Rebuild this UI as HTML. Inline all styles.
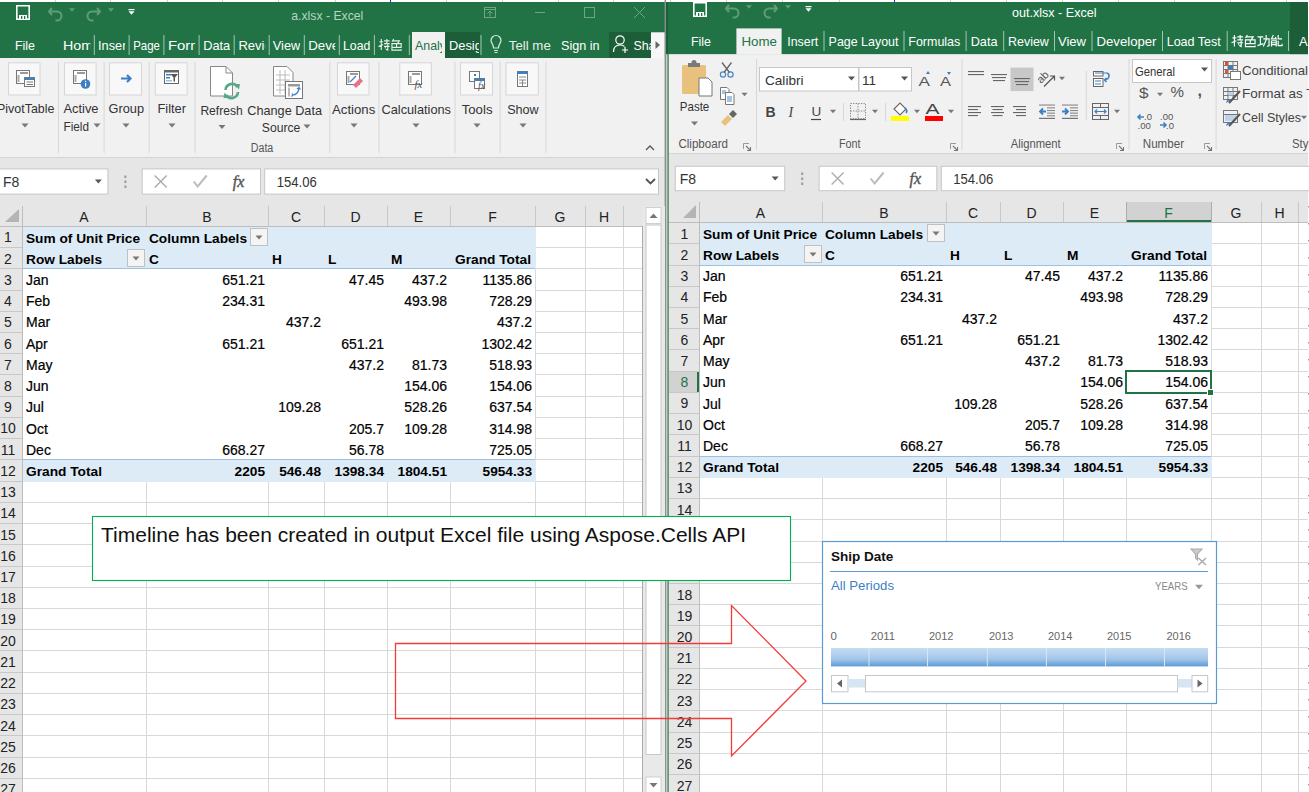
<!DOCTYPE html>
<html><head><meta charset="utf-8"><style>
html,body{margin:0;padding:0;width:1309px;height:792px;overflow:hidden;background:#fff;font-family:"Liberation Sans",sans-serif;}
</style></head><body>
<svg width="1309" height="792" viewBox="0 0 1309 792" style="position:absolute;left:0;top:0" font-family='"Liberation Sans", sans-serif'>
<rect x="0" y="0" width="1309" height="792" fill="#ffffff" />
<line x1="55.5" y1="0" x2="55.5" y2="2" stroke="#d0d0d0" stroke-width="1" />
<line x1="110.5" y1="0" x2="110.5" y2="2" stroke="#d0d0d0" stroke-width="1" />
<line x1="167.5" y1="0" x2="167.5" y2="2" stroke="#d0d0d0" stroke-width="1" />
<line x1="222.5" y1="0" x2="222.5" y2="2" stroke="#d0d0d0" stroke-width="1" />
<line x1="278.5" y1="0" x2="278.5" y2="2" stroke="#d0d0d0" stroke-width="1" />
<line x1="335.5" y1="0" x2="335.5" y2="2" stroke="#d0d0d0" stroke-width="1" />
<line x1="446.5" y1="0" x2="446.5" y2="2" stroke="#d0d0d0" stroke-width="1" />
<line x1="502.5" y1="0" x2="502.5" y2="2" stroke="#d0d0d0" stroke-width="1" />
<line x1="558.5" y1="0" x2="558.5" y2="2" stroke="#d0d0d0" stroke-width="1" />
<line x1="613.5" y1="0" x2="613.5" y2="2" stroke="#d0d0d0" stroke-width="1" />
<line x1="390.5" y1="0" x2="390.5" y2="2" stroke="#2030d0" stroke-width="1" />
<rect x="0" y="2" width="665" height="56" fill="#217346" />
<rect x="0" y="58" width="665" height="99" fill="#f1f1f1" />
<line x1="0" y1="157.5" x2="665" y2="157.5" stroke="#d5d5d5" stroke-width="1" />
<rect x="0" y="158" width="665" height="68" fill="#e6e6e6" />
<line x1="670.5" y1="0" x2="670.5" y2="2" stroke="#d0d0d0" stroke-width="1" />
<line x1="726.5" y1="0" x2="726.5" y2="2" stroke="#d0d0d0" stroke-width="1" />
<line x1="782.5" y1="0" x2="782.5" y2="2" stroke="#d0d0d0" stroke-width="1" />
<line x1="839.5" y1="0" x2="839.5" y2="2" stroke="#d0d0d0" stroke-width="1" />
<line x1="950.5" y1="0" x2="950.5" y2="2" stroke="#d0d0d0" stroke-width="1" />
<line x1="1006.5" y1="0" x2="1006.5" y2="2" stroke="#d0d0d0" stroke-width="1" />
<line x1="1062.5" y1="0" x2="1062.5" y2="2" stroke="#d0d0d0" stroke-width="1" />
<line x1="1118.5" y1="0" x2="1118.5" y2="2" stroke="#d0d0d0" stroke-width="1" />
<line x1="1174.5" y1="0" x2="1174.5" y2="2" stroke="#d0d0d0" stroke-width="1" />
<line x1="1230.5" y1="0" x2="1230.5" y2="2" stroke="#d0d0d0" stroke-width="1" />
<line x1="1286.5" y1="0" x2="1286.5" y2="2" stroke="#d0d0d0" stroke-width="1" />
<line x1="894.5" y1="0" x2="894.5" y2="2" stroke="#2030d0" stroke-width="1" />
<rect x="666" y="2" width="643" height="52.4" fill="#217346" />
<rect x="1290" y="2" width="18" height="52.4" fill="#1b5e38" />
<rect x="669" y="54.4" width="640" height="99" fill="#f1f1f1" />
<line x1="669" y1="153.5" x2="1309" y2="153.5" stroke="#d5d5d5" stroke-width="1" />
<rect x="669" y="154" width="640" height="68.6" fill="#e6e6e6" />
<rect x="664.6" y="0" width="1.4" height="792" fill="#8f8f8f" />
<rect x="666" y="2" width="2" height="52.4" fill="#1b5e38" />
<rect x="666" y="54.4" width="1.5" height="740" fill="#c8c8c8" />
<rect x="667.5" y="54.4" width="1.2" height="740" fill="#217346" />
<rect x="1308" y="0" width="1" height="792" fill="#ffffff" />
<rect x="1308" y="172" width="1" height="1.5" fill="#9a9a9a" />
<rect x="1308" y="189" width="1" height="1.5" fill="#9a9a9a" />
<rect x="1308" y="206" width="1" height="1.5" fill="#9a9a9a" />
<rect x="1308" y="223" width="1" height="1.5" fill="#9a9a9a" />
<rect x="1308" y="240" width="1" height="1.5" fill="#9a9a9a" />
<rect x="1308" y="257" width="1" height="1.5" fill="#9a9a9a" />
<rect x="1308" y="274" width="1" height="1.5" fill="#9a9a9a" />
<rect x="1308" y="291" width="1" height="1.5" fill="#9a9a9a" />
<rect x="1308" y="308" width="1" height="1.5" fill="#9a9a9a" />
<rect x="1308" y="325" width="1" height="1.5" fill="#9a9a9a" />
<rect x="1308" y="342" width="1" height="1.5" fill="#9a9a9a" />
<rect x="1308" y="359" width="1" height="1.5" fill="#9a9a9a" />
<rect x="1308" y="376" width="1" height="1.5" fill="#9a9a9a" />
<rect x="1308" y="393" width="1" height="1.5" fill="#9a9a9a" />
<rect x="1308" y="410" width="1" height="1.5" fill="#9a9a9a" />
<rect x="1308" y="427" width="1" height="1.5" fill="#9a9a9a" />
<rect x="1308" y="444" width="1" height="1.5" fill="#9a9a9a" />
<rect x="1308" y="461" width="1" height="1.5" fill="#9a9a9a" />
<rect x="1308" y="478" width="1" height="1.5" fill="#9a9a9a" />
<rect x="1308" y="495" width="1" height="1.5" fill="#9a9a9a" />
<rect x="1308" y="512" width="1" height="1.5" fill="#9a9a9a" />
<rect x="1308" y="529" width="1" height="1.5" fill="#9a9a9a" />
<rect x="1308" y="546" width="1" height="1.5" fill="#9a9a9a" />
<rect x="1308" y="563" width="1" height="1.5" fill="#9a9a9a" />
<rect x="1308" y="580" width="1" height="1.5" fill="#9a9a9a" />
<rect x="1308" y="597" width="1" height="1.5" fill="#9a9a9a" />
<rect x="1308" y="614" width="1" height="1.5" fill="#9a9a9a" />
<rect x="1308" y="631" width="1" height="1.5" fill="#9a9a9a" />
<rect x="1308" y="648" width="1" height="1.5" fill="#9a9a9a" />
<rect x="1308" y="665" width="1" height="1.5" fill="#9a9a9a" />
<rect x="1308" y="682" width="1" height="1.5" fill="#9a9a9a" />
<rect x="1308" y="699" width="1" height="1.5" fill="#9a9a9a" />
<rect x="1308" y="716" width="1" height="1.5" fill="#9a9a9a" />
<rect x="1308" y="733" width="1" height="1.5" fill="#9a9a9a" />
<rect x="1308" y="750" width="1" height="1.5" fill="#9a9a9a" />
<rect x="1308" y="767" width="1" height="1.5" fill="#9a9a9a" />
<rect x="1308" y="784" width="1" height="1.5" fill="#9a9a9a" />
<rect x="1308" y="801" width="1" height="1.5" fill="#9a9a9a" />
<line x1="146.5" y1="206" x2="146.5" y2="226" stroke="#c8c8c8" stroke-width="1" />
<line x1="268.5" y1="206" x2="268.5" y2="226" stroke="#c8c8c8" stroke-width="1" />
<line x1="324.5" y1="206" x2="324.5" y2="226" stroke="#c8c8c8" stroke-width="1" />
<line x1="387.5" y1="206" x2="387.5" y2="226" stroke="#c8c8c8" stroke-width="1" />
<line x1="450.5" y1="206" x2="450.5" y2="226" stroke="#c8c8c8" stroke-width="1" />
<line x1="535.5" y1="206" x2="535.5" y2="226" stroke="#c8c8c8" stroke-width="1" />
<line x1="585.5" y1="206" x2="585.5" y2="226" stroke="#c8c8c8" stroke-width="1" />
<line x1="623.5" y1="206" x2="623.5" y2="226" stroke="#c8c8c8" stroke-width="1" />
<line x1="22.5" y1="206" x2="22.5" y2="792" stroke="#bdbdbd" stroke-width="1" />
<line x1="0" y1="226.5" x2="642" y2="226.5" stroke="#bdbdbd" stroke-width="1" />
<rect x="23" y="227" width="619" height="566" fill="#ffffff" />
<rect x="0" y="227" width="22" height="566" fill="#e6e6e6" />
<line x1="0" y1="247.5" x2="22" y2="247.5" stroke="#c8c8c8" stroke-width="1" />
<line x1="536" y1="247.5" x2="642" y2="247.5" stroke="#d9d9d9" stroke-width="1" />
<line x1="0" y1="268.5" x2="22" y2="268.5" stroke="#c8c8c8" stroke-width="1" />
<line x1="536" y1="268.5" x2="642" y2="268.5" stroke="#d9d9d9" stroke-width="1" />
<line x1="0" y1="290.5" x2="22" y2="290.5" stroke="#c8c8c8" stroke-width="1" />
<line x1="536" y1="290.5" x2="642" y2="290.5" stroke="#d9d9d9" stroke-width="1" />
<line x1="0" y1="311.5" x2="22" y2="311.5" stroke="#c8c8c8" stroke-width="1" />
<line x1="536" y1="311.5" x2="642" y2="311.5" stroke="#d9d9d9" stroke-width="1" />
<line x1="0" y1="332.5" x2="22" y2="332.5" stroke="#c8c8c8" stroke-width="1" />
<line x1="536" y1="332.5" x2="642" y2="332.5" stroke="#d9d9d9" stroke-width="1" />
<line x1="0" y1="353.5" x2="22" y2="353.5" stroke="#c8c8c8" stroke-width="1" />
<line x1="536" y1="353.5" x2="642" y2="353.5" stroke="#d9d9d9" stroke-width="1" />
<line x1="0" y1="374.5" x2="22" y2="374.5" stroke="#c8c8c8" stroke-width="1" />
<line x1="536" y1="374.5" x2="642" y2="374.5" stroke="#d9d9d9" stroke-width="1" />
<line x1="0" y1="396.5" x2="22" y2="396.5" stroke="#c8c8c8" stroke-width="1" />
<line x1="536" y1="396.5" x2="642" y2="396.5" stroke="#d9d9d9" stroke-width="1" />
<line x1="0" y1="417.5" x2="22" y2="417.5" stroke="#c8c8c8" stroke-width="1" />
<line x1="536" y1="417.5" x2="642" y2="417.5" stroke="#d9d9d9" stroke-width="1" />
<line x1="0" y1="438.5" x2="22" y2="438.5" stroke="#c8c8c8" stroke-width="1" />
<line x1="536" y1="438.5" x2="642" y2="438.5" stroke="#d9d9d9" stroke-width="1" />
<line x1="0" y1="459.5" x2="22" y2="459.5" stroke="#c8c8c8" stroke-width="1" />
<line x1="536" y1="459.5" x2="642" y2="459.5" stroke="#d9d9d9" stroke-width="1" />
<line x1="0" y1="481.5" x2="22" y2="481.5" stroke="#c8c8c8" stroke-width="1" />
<line x1="536" y1="481.5" x2="642" y2="481.5" stroke="#d9d9d9" stroke-width="1" />
<line x1="0" y1="502.5" x2="22" y2="502.5" stroke="#c8c8c8" stroke-width="1" />
<line x1="23" y1="502.5" x2="642" y2="502.5" stroke="#d9d9d9" stroke-width="1" />
<line x1="0" y1="523.5" x2="22" y2="523.5" stroke="#c8c8c8" stroke-width="1" />
<line x1="23" y1="523.5" x2="642" y2="523.5" stroke="#d9d9d9" stroke-width="1" />
<line x1="0" y1="544.5" x2="22" y2="544.5" stroke="#c8c8c8" stroke-width="1" />
<line x1="23" y1="544.5" x2="642" y2="544.5" stroke="#d9d9d9" stroke-width="1" />
<line x1="0" y1="566.5" x2="22" y2="566.5" stroke="#c8c8c8" stroke-width="1" />
<line x1="23" y1="566.5" x2="642" y2="566.5" stroke="#d9d9d9" stroke-width="1" />
<line x1="0" y1="587.5" x2="22" y2="587.5" stroke="#c8c8c8" stroke-width="1" />
<line x1="23" y1="587.5" x2="642" y2="587.5" stroke="#d9d9d9" stroke-width="1" />
<line x1="0" y1="608.5" x2="22" y2="608.5" stroke="#c8c8c8" stroke-width="1" />
<line x1="23" y1="608.5" x2="642" y2="608.5" stroke="#d9d9d9" stroke-width="1" />
<line x1="0" y1="629.5" x2="22" y2="629.5" stroke="#c8c8c8" stroke-width="1" />
<line x1="23" y1="629.5" x2="642" y2="629.5" stroke="#d9d9d9" stroke-width="1" />
<line x1="0" y1="650.5" x2="22" y2="650.5" stroke="#c8c8c8" stroke-width="1" />
<line x1="23" y1="650.5" x2="642" y2="650.5" stroke="#d9d9d9" stroke-width="1" />
<line x1="0" y1="672.5" x2="22" y2="672.5" stroke="#c8c8c8" stroke-width="1" />
<line x1="23" y1="672.5" x2="642" y2="672.5" stroke="#d9d9d9" stroke-width="1" />
<line x1="0" y1="693.5" x2="22" y2="693.5" stroke="#c8c8c8" stroke-width="1" />
<line x1="23" y1="693.5" x2="642" y2="693.5" stroke="#d9d9d9" stroke-width="1" />
<line x1="0" y1="714.5" x2="22" y2="714.5" stroke="#c8c8c8" stroke-width="1" />
<line x1="23" y1="714.5" x2="642" y2="714.5" stroke="#d9d9d9" stroke-width="1" />
<line x1="0" y1="735.5" x2="22" y2="735.5" stroke="#c8c8c8" stroke-width="1" />
<line x1="23" y1="735.5" x2="642" y2="735.5" stroke="#d9d9d9" stroke-width="1" />
<line x1="0" y1="757.5" x2="22" y2="757.5" stroke="#c8c8c8" stroke-width="1" />
<line x1="23" y1="757.5" x2="642" y2="757.5" stroke="#d9d9d9" stroke-width="1" />
<line x1="0" y1="778.5" x2="22" y2="778.5" stroke="#c8c8c8" stroke-width="1" />
<line x1="23" y1="778.5" x2="642" y2="778.5" stroke="#d9d9d9" stroke-width="1" />
<line x1="0" y1="799.5" x2="22" y2="799.5" stroke="#c8c8c8" stroke-width="1" />
<line x1="23" y1="799.5" x2="642" y2="799.5" stroke="#d9d9d9" stroke-width="1" />
<line x1="146.5" y1="482" x2="146.5" y2="792" stroke="#d9d9d9" stroke-width="1" />
<line x1="268.5" y1="482" x2="268.5" y2="792" stroke="#d9d9d9" stroke-width="1" />
<line x1="324.5" y1="482" x2="324.5" y2="792" stroke="#d9d9d9" stroke-width="1" />
<line x1="387.5" y1="482" x2="387.5" y2="792" stroke="#d9d9d9" stroke-width="1" />
<line x1="450.5" y1="482" x2="450.5" y2="792" stroke="#d9d9d9" stroke-width="1" />
<line x1="535.5" y1="227" x2="535.5" y2="792" stroke="#d9d9d9" stroke-width="1" />
<line x1="585.5" y1="227" x2="585.5" y2="792" stroke="#d9d9d9" stroke-width="1" />
<line x1="623.5" y1="227" x2="623.5" y2="792" stroke="#d9d9d9" stroke-width="1" />
<line x1="822.5" y1="202" x2="822.5" y2="222" stroke="#c8c8c8" stroke-width="1" />
<line x1="946.5" y1="202" x2="946.5" y2="222" stroke="#c8c8c8" stroke-width="1" />
<line x1="1000.5" y1="202" x2="1000.5" y2="222" stroke="#c8c8c8" stroke-width="1" />
<line x1="1063.5" y1="202" x2="1063.5" y2="222" stroke="#c8c8c8" stroke-width="1" />
<line x1="1126.5" y1="202" x2="1126.5" y2="222" stroke="#c8c8c8" stroke-width="1" />
<line x1="1211.5" y1="202" x2="1211.5" y2="222" stroke="#c8c8c8" stroke-width="1" />
<line x1="1261.5" y1="202" x2="1261.5" y2="222" stroke="#c8c8c8" stroke-width="1" />
<line x1="1298.5" y1="202" x2="1298.5" y2="222" stroke="#c8c8c8" stroke-width="1" />
<line x1="699.5" y1="202" x2="699.5" y2="792" stroke="#bdbdbd" stroke-width="1" />
<line x1="669" y1="222.5" x2="1308" y2="222.5" stroke="#bdbdbd" stroke-width="1" />
<rect x="700" y="223" width="608" height="570" fill="#ffffff" />
<rect x="669" y="223" width="30" height="570" fill="#e6e6e6" />
<line x1="669" y1="243.5" x2="699" y2="243.5" stroke="#c8c8c8" stroke-width="1" />
<line x1="1212" y1="243.5" x2="1308" y2="243.5" stroke="#d9d9d9" stroke-width="1" />
<line x1="669" y1="265.5" x2="699" y2="265.5" stroke="#c8c8c8" stroke-width="1" />
<line x1="1212" y1="265.5" x2="1308" y2="265.5" stroke="#d9d9d9" stroke-width="1" />
<line x1="669" y1="286.5" x2="699" y2="286.5" stroke="#c8c8c8" stroke-width="1" />
<line x1="1212" y1="286.5" x2="1308" y2="286.5" stroke="#d9d9d9" stroke-width="1" />
<line x1="669" y1="307.5" x2="699" y2="307.5" stroke="#c8c8c8" stroke-width="1" />
<line x1="1212" y1="307.5" x2="1308" y2="307.5" stroke="#d9d9d9" stroke-width="1" />
<line x1="669" y1="328.5" x2="699" y2="328.5" stroke="#c8c8c8" stroke-width="1" />
<line x1="1212" y1="328.5" x2="1308" y2="328.5" stroke="#d9d9d9" stroke-width="1" />
<line x1="669" y1="349.5" x2="699" y2="349.5" stroke="#c8c8c8" stroke-width="1" />
<line x1="1212" y1="349.5" x2="1308" y2="349.5" stroke="#d9d9d9" stroke-width="1" />
<line x1="669" y1="371.5" x2="699" y2="371.5" stroke="#c8c8c8" stroke-width="1" />
<line x1="1212" y1="371.5" x2="1308" y2="371.5" stroke="#d9d9d9" stroke-width="1" />
<line x1="669" y1="392.5" x2="699" y2="392.5" stroke="#c8c8c8" stroke-width="1" />
<line x1="1212" y1="392.5" x2="1308" y2="392.5" stroke="#d9d9d9" stroke-width="1" />
<line x1="669" y1="413.5" x2="699" y2="413.5" stroke="#c8c8c8" stroke-width="1" />
<line x1="1212" y1="413.5" x2="1308" y2="413.5" stroke="#d9d9d9" stroke-width="1" />
<line x1="669" y1="434.5" x2="699" y2="434.5" stroke="#c8c8c8" stroke-width="1" />
<line x1="1212" y1="434.5" x2="1308" y2="434.5" stroke="#d9d9d9" stroke-width="1" />
<line x1="669" y1="456.5" x2="699" y2="456.5" stroke="#c8c8c8" stroke-width="1" />
<line x1="1212" y1="456.5" x2="1308" y2="456.5" stroke="#d9d9d9" stroke-width="1" />
<line x1="669" y1="477.5" x2="699" y2="477.5" stroke="#c8c8c8" stroke-width="1" />
<line x1="1212" y1="477.5" x2="1308" y2="477.5" stroke="#d9d9d9" stroke-width="1" />
<line x1="669" y1="498.5" x2="699" y2="498.5" stroke="#c8c8c8" stroke-width="1" />
<line x1="700" y1="498.5" x2="1308" y2="498.5" stroke="#d9d9d9" stroke-width="1" />
<line x1="669" y1="519.5" x2="699" y2="519.5" stroke="#c8c8c8" stroke-width="1" />
<line x1="700" y1="519.5" x2="1308" y2="519.5" stroke="#d9d9d9" stroke-width="1" />
<line x1="669" y1="541.5" x2="699" y2="541.5" stroke="#c8c8c8" stroke-width="1" />
<line x1="700" y1="541.5" x2="1308" y2="541.5" stroke="#d9d9d9" stroke-width="1" />
<line x1="669" y1="562.5" x2="699" y2="562.5" stroke="#c8c8c8" stroke-width="1" />
<line x1="700" y1="562.5" x2="1308" y2="562.5" stroke="#d9d9d9" stroke-width="1" />
<line x1="669" y1="583.5" x2="699" y2="583.5" stroke="#c8c8c8" stroke-width="1" />
<line x1="700" y1="583.5" x2="1308" y2="583.5" stroke="#d9d9d9" stroke-width="1" />
<line x1="669" y1="604.5" x2="699" y2="604.5" stroke="#c8c8c8" stroke-width="1" />
<line x1="700" y1="604.5" x2="1308" y2="604.5" stroke="#d9d9d9" stroke-width="1" />
<line x1="669" y1="625.5" x2="699" y2="625.5" stroke="#c8c8c8" stroke-width="1" />
<line x1="700" y1="625.5" x2="1308" y2="625.5" stroke="#d9d9d9" stroke-width="1" />
<line x1="669" y1="647.5" x2="699" y2="647.5" stroke="#c8c8c8" stroke-width="1" />
<line x1="700" y1="647.5" x2="1308" y2="647.5" stroke="#d9d9d9" stroke-width="1" />
<line x1="669" y1="668.5" x2="699" y2="668.5" stroke="#c8c8c8" stroke-width="1" />
<line x1="700" y1="668.5" x2="1308" y2="668.5" stroke="#d9d9d9" stroke-width="1" />
<line x1="669" y1="689.5" x2="699" y2="689.5" stroke="#c8c8c8" stroke-width="1" />
<line x1="700" y1="689.5" x2="1308" y2="689.5" stroke="#d9d9d9" stroke-width="1" />
<line x1="669" y1="710.5" x2="699" y2="710.5" stroke="#c8c8c8" stroke-width="1" />
<line x1="700" y1="710.5" x2="1308" y2="710.5" stroke="#d9d9d9" stroke-width="1" />
<line x1="669" y1="732.5" x2="699" y2="732.5" stroke="#c8c8c8" stroke-width="1" />
<line x1="700" y1="732.5" x2="1308" y2="732.5" stroke="#d9d9d9" stroke-width="1" />
<line x1="669" y1="753.5" x2="699" y2="753.5" stroke="#c8c8c8" stroke-width="1" />
<line x1="700" y1="753.5" x2="1308" y2="753.5" stroke="#d9d9d9" stroke-width="1" />
<line x1="669" y1="774.5" x2="699" y2="774.5" stroke="#c8c8c8" stroke-width="1" />
<line x1="700" y1="774.5" x2="1308" y2="774.5" stroke="#d9d9d9" stroke-width="1" />
<line x1="669" y1="795.5" x2="699" y2="795.5" stroke="#c8c8c8" stroke-width="1" />
<line x1="700" y1="795.5" x2="1308" y2="795.5" stroke="#d9d9d9" stroke-width="1" />
<line x1="822.5" y1="478" x2="822.5" y2="792" stroke="#d9d9d9" stroke-width="1" />
<line x1="946.5" y1="478" x2="946.5" y2="792" stroke="#d9d9d9" stroke-width="1" />
<line x1="1000.5" y1="478" x2="1000.5" y2="792" stroke="#d9d9d9" stroke-width="1" />
<line x1="1063.5" y1="478" x2="1063.5" y2="792" stroke="#d9d9d9" stroke-width="1" />
<line x1="1126.5" y1="478" x2="1126.5" y2="792" stroke="#d9d9d9" stroke-width="1" />
<line x1="1211.5" y1="223" x2="1211.5" y2="792" stroke="#d9d9d9" stroke-width="1" />
<line x1="1261.5" y1="223" x2="1261.5" y2="792" stroke="#d9d9d9" stroke-width="1" />
<line x1="1298.5" y1="223" x2="1298.5" y2="792" stroke="#d9d9d9" stroke-width="1" />
<rect x="23" y="227" width="513" height="42" fill="#ddebf7" />
<line x1="23" y1="268.5" x2="535" y2="268.5" stroke="#9bc2e6" stroke-width="1" />
<rect x="23" y="460" width="513" height="22" fill="#ddebf7" />
<line x1="23" y1="459.5" x2="535" y2="459.5" stroke="#9bc2e6" stroke-width="1" />
<text x="26" y="242.5" font-size="13.7" fill="#000" font-weight="bold" textLength="114" lengthAdjust="spacingAndGlyphs" >Sum of Unit Price</text>
<text x="149" y="242.5" font-size="13.7" fill="#000" font-weight="bold" textLength="98" lengthAdjust="spacingAndGlyphs" >Column Labels</text>
<text x="26" y="263.72700000000003" font-size="13.7" fill="#000" font-weight="bold" textLength="76" lengthAdjust="spacingAndGlyphs" >Row Labels</text>
<text x="149" y="263.72700000000003" font-size="13.7" fill="#000" font-weight="bold" >C</text>
<text x="272" y="263.72700000000003" font-size="13.7" fill="#000" font-weight="bold" >H</text>
<text x="328" y="263.72700000000003" font-size="13.7" fill="#000" font-weight="bold" >L</text>
<text x="391" y="263.72700000000003" font-size="13.7" fill="#000" font-weight="bold" >M</text>
<text x="531" y="263.72700000000003" font-size="13.7" fill="#000" font-weight="bold" text-anchor="end" textLength="76" lengthAdjust="spacingAndGlyphs" >Grand Total</text>
<text x="26" y="284.954" font-size="14" fill="#000" stroke="#000" stroke-width="0.2" >Jan</text>
<text x="265" y="284.954" font-size="14" fill="#000" stroke="#000" stroke-width="0.2" text-anchor="end" >651.21</text>
<text x="384" y="284.954" font-size="14" fill="#000" stroke="#000" stroke-width="0.2" text-anchor="end" >47.45</text>
<text x="447" y="284.954" font-size="14" fill="#000" stroke="#000" stroke-width="0.2" text-anchor="end" >437.2</text>
<text x="532" y="284.954" font-size="14" fill="#000" stroke="#000" stroke-width="0.2" text-anchor="end" >1135.86</text>
<text x="26" y="306.18100000000004" font-size="14" fill="#000" stroke="#000" stroke-width="0.2" >Feb</text>
<text x="265" y="306.18100000000004" font-size="14" fill="#000" stroke="#000" stroke-width="0.2" text-anchor="end" >234.31</text>
<text x="447" y="306.18100000000004" font-size="14" fill="#000" stroke="#000" stroke-width="0.2" text-anchor="end" >493.98</text>
<text x="532" y="306.18100000000004" font-size="14" fill="#000" stroke="#000" stroke-width="0.2" text-anchor="end" >728.29</text>
<text x="26" y="327.408" font-size="14" fill="#000" stroke="#000" stroke-width="0.2" >Mar</text>
<text x="321" y="327.408" font-size="14" fill="#000" stroke="#000" stroke-width="0.2" text-anchor="end" >437.2</text>
<text x="532" y="327.408" font-size="14" fill="#000" stroke="#000" stroke-width="0.2" text-anchor="end" >437.2</text>
<text x="26" y="348.63500000000005" font-size="14" fill="#000" stroke="#000" stroke-width="0.2" >Apr</text>
<text x="265" y="348.63500000000005" font-size="14" fill="#000" stroke="#000" stroke-width="0.2" text-anchor="end" >651.21</text>
<text x="384" y="348.63500000000005" font-size="14" fill="#000" stroke="#000" stroke-width="0.2" text-anchor="end" >651.21</text>
<text x="532" y="348.63500000000005" font-size="14" fill="#000" stroke="#000" stroke-width="0.2" text-anchor="end" >1302.42</text>
<text x="26" y="369.862" font-size="14" fill="#000" stroke="#000" stroke-width="0.2" >May</text>
<text x="384" y="369.862" font-size="14" fill="#000" stroke="#000" stroke-width="0.2" text-anchor="end" >437.2</text>
<text x="447" y="369.862" font-size="14" fill="#000" stroke="#000" stroke-width="0.2" text-anchor="end" >81.73</text>
<text x="532" y="369.862" font-size="14" fill="#000" stroke="#000" stroke-width="0.2" text-anchor="end" >518.93</text>
<text x="26" y="391.08900000000006" font-size="14" fill="#000" stroke="#000" stroke-width="0.2" >Jun</text>
<text x="447" y="391.08900000000006" font-size="14" fill="#000" stroke="#000" stroke-width="0.2" text-anchor="end" >154.06</text>
<text x="532" y="391.08900000000006" font-size="14" fill="#000" stroke="#000" stroke-width="0.2" text-anchor="end" >154.06</text>
<text x="26" y="412.31600000000003" font-size="14" fill="#000" stroke="#000" stroke-width="0.2" >Jul</text>
<text x="321" y="412.31600000000003" font-size="14" fill="#000" stroke="#000" stroke-width="0.2" text-anchor="end" >109.28</text>
<text x="447" y="412.31600000000003" font-size="14" fill="#000" stroke="#000" stroke-width="0.2" text-anchor="end" >528.26</text>
<text x="532" y="412.31600000000003" font-size="14" fill="#000" stroke="#000" stroke-width="0.2" text-anchor="end" >637.54</text>
<text x="26" y="433.543" font-size="14" fill="#000" stroke="#000" stroke-width="0.2" >Oct</text>
<text x="384" y="433.543" font-size="14" fill="#000" stroke="#000" stroke-width="0.2" text-anchor="end" >205.7</text>
<text x="447" y="433.543" font-size="14" fill="#000" stroke="#000" stroke-width="0.2" text-anchor="end" >109.28</text>
<text x="532" y="433.543" font-size="14" fill="#000" stroke="#000" stroke-width="0.2" text-anchor="end" >314.98</text>
<text x="26" y="454.77000000000004" font-size="14" fill="#000" stroke="#000" stroke-width="0.2" >Dec</text>
<text x="265" y="454.77000000000004" font-size="14" fill="#000" stroke="#000" stroke-width="0.2" text-anchor="end" >668.27</text>
<text x="384" y="454.77000000000004" font-size="14" fill="#000" stroke="#000" stroke-width="0.2" text-anchor="end" >56.78</text>
<text x="532" y="454.77000000000004" font-size="14" fill="#000" stroke="#000" stroke-width="0.2" text-anchor="end" >725.05</text>
<text x="26" y="475.99700000000007" font-size="13.7" fill="#000" font-weight="bold" textLength="76" lengthAdjust="spacingAndGlyphs" >Grand Total</text>
<text x="265" y="475.99700000000007" font-size="13.7" fill="#000" font-weight="bold" text-anchor="end" >2205</text>
<text x="321" y="475.99700000000007" font-size="13.7" fill="#000" font-weight="bold" text-anchor="end" >546.48</text>
<text x="384" y="475.99700000000007" font-size="13.7" fill="#000" font-weight="bold" text-anchor="end" >1398.34</text>
<text x="447" y="475.99700000000007" font-size="13.7" fill="#000" font-weight="bold" text-anchor="end" >1804.51</text>
<text x="532" y="475.99700000000007" font-size="13.7" fill="#000" font-weight="bold" text-anchor="end" >5954.33</text>
<rect x="250.5" y="228.5" width="17" height="17" fill="#f4f4f4" stroke="#c0c0c0" stroke-width="1" />
<path d="M255.5,235.5 L262.5,235.5 L259.0,239.5 Z" fill="#777"/>
<rect x="127.5" y="249.5" width="17" height="17" fill="#f4f4f4" stroke="#c0c0c0" stroke-width="1" />
<path d="M132.5,256.5 L139.5,256.5 L136.0,260.5 Z" fill="#777"/>
<rect x="700" y="223" width="512" height="43" fill="#ddebf7" />
<line x1="700" y1="265.5" x2="1211" y2="265.5" stroke="#9bc2e6" stroke-width="1" />
<rect x="700" y="457" width="512" height="21" fill="#ddebf7" />
<line x1="700" y1="456.5" x2="1211" y2="456.5" stroke="#9bc2e6" stroke-width="1" />
<text x="703" y="238.7" font-size="13.7" fill="#000" font-weight="bold" textLength="114" lengthAdjust="spacingAndGlyphs" >Sum of Unit Price</text>
<text x="825" y="238.7" font-size="13.7" fill="#000" font-weight="bold" textLength="98" lengthAdjust="spacingAndGlyphs" >Column Labels</text>
<text x="703" y="259.93" font-size="13.7" fill="#000" font-weight="bold" textLength="76" lengthAdjust="spacingAndGlyphs" >Row Labels</text>
<text x="825" y="259.93" font-size="13.7" fill="#000" font-weight="bold" >C</text>
<text x="950" y="259.93" font-size="13.7" fill="#000" font-weight="bold" >H</text>
<text x="1004" y="259.93" font-size="13.7" fill="#000" font-weight="bold" >L</text>
<text x="1067" y="259.93" font-size="13.7" fill="#000" font-weight="bold" >M</text>
<text x="1207" y="259.93" font-size="13.7" fill="#000" font-weight="bold" text-anchor="end" textLength="76" lengthAdjust="spacingAndGlyphs" >Grand Total</text>
<text x="703" y="281.16" font-size="14" fill="#000" stroke="#000" stroke-width="0.2" >Jan</text>
<text x="943" y="281.16" font-size="14" fill="#000" stroke="#000" stroke-width="0.2" text-anchor="end" >651.21</text>
<text x="1060" y="281.16" font-size="14" fill="#000" stroke="#000" stroke-width="0.2" text-anchor="end" >47.45</text>
<text x="1123" y="281.16" font-size="14" fill="#000" stroke="#000" stroke-width="0.2" text-anchor="end" >437.2</text>
<text x="1208" y="281.16" font-size="14" fill="#000" stroke="#000" stroke-width="0.2" text-anchor="end" >1135.86</text>
<text x="703" y="302.39" font-size="14" fill="#000" stroke="#000" stroke-width="0.2" >Feb</text>
<text x="943" y="302.39" font-size="14" fill="#000" stroke="#000" stroke-width="0.2" text-anchor="end" >234.31</text>
<text x="1123" y="302.39" font-size="14" fill="#000" stroke="#000" stroke-width="0.2" text-anchor="end" >493.98</text>
<text x="1208" y="302.39" font-size="14" fill="#000" stroke="#000" stroke-width="0.2" text-anchor="end" >728.29</text>
<text x="703" y="323.62" font-size="14" fill="#000" stroke="#000" stroke-width="0.2" >Mar</text>
<text x="997" y="323.62" font-size="14" fill="#000" stroke="#000" stroke-width="0.2" text-anchor="end" >437.2</text>
<text x="1208" y="323.62" font-size="14" fill="#000" stroke="#000" stroke-width="0.2" text-anchor="end" >437.2</text>
<text x="703" y="344.85" font-size="14" fill="#000" stroke="#000" stroke-width="0.2" >Apr</text>
<text x="943" y="344.85" font-size="14" fill="#000" stroke="#000" stroke-width="0.2" text-anchor="end" >651.21</text>
<text x="1060" y="344.85" font-size="14" fill="#000" stroke="#000" stroke-width="0.2" text-anchor="end" >651.21</text>
<text x="1208" y="344.85" font-size="14" fill="#000" stroke="#000" stroke-width="0.2" text-anchor="end" >1302.42</text>
<text x="703" y="366.08000000000004" font-size="14" fill="#000" stroke="#000" stroke-width="0.2" >May</text>
<text x="1060" y="366.08000000000004" font-size="14" fill="#000" stroke="#000" stroke-width="0.2" text-anchor="end" >437.2</text>
<text x="1123" y="366.08000000000004" font-size="14" fill="#000" stroke="#000" stroke-width="0.2" text-anchor="end" >81.73</text>
<text x="1208" y="366.08000000000004" font-size="14" fill="#000" stroke="#000" stroke-width="0.2" text-anchor="end" >518.93</text>
<text x="703" y="387.31000000000006" font-size="14" fill="#000" stroke="#000" stroke-width="0.2" >Jun</text>
<text x="1123" y="387.31000000000006" font-size="14" fill="#000" stroke="#000" stroke-width="0.2" text-anchor="end" >154.06</text>
<text x="1208" y="387.31000000000006" font-size="14" fill="#000" stroke="#000" stroke-width="0.2" text-anchor="end" >154.06</text>
<text x="703" y="408.54" font-size="14" fill="#000" stroke="#000" stroke-width="0.2" >Jul</text>
<text x="997" y="408.54" font-size="14" fill="#000" stroke="#000" stroke-width="0.2" text-anchor="end" >109.28</text>
<text x="1123" y="408.54" font-size="14" fill="#000" stroke="#000" stroke-width="0.2" text-anchor="end" >528.26</text>
<text x="1208" y="408.54" font-size="14" fill="#000" stroke="#000" stroke-width="0.2" text-anchor="end" >637.54</text>
<text x="703" y="429.77" font-size="14" fill="#000" stroke="#000" stroke-width="0.2" >Oct</text>
<text x="1060" y="429.77" font-size="14" fill="#000" stroke="#000" stroke-width="0.2" text-anchor="end" >205.7</text>
<text x="1123" y="429.77" font-size="14" fill="#000" stroke="#000" stroke-width="0.2" text-anchor="end" >109.28</text>
<text x="1208" y="429.77" font-size="14" fill="#000" stroke="#000" stroke-width="0.2" text-anchor="end" >314.98</text>
<text x="703" y="451.0" font-size="14" fill="#000" stroke="#000" stroke-width="0.2" >Dec</text>
<text x="943" y="451.0" font-size="14" fill="#000" stroke="#000" stroke-width="0.2" text-anchor="end" >668.27</text>
<text x="1060" y="451.0" font-size="14" fill="#000" stroke="#000" stroke-width="0.2" text-anchor="end" >56.78</text>
<text x="1208" y="451.0" font-size="14" fill="#000" stroke="#000" stroke-width="0.2" text-anchor="end" >725.05</text>
<text x="703" y="472.23" font-size="13.7" fill="#000" font-weight="bold" textLength="76" lengthAdjust="spacingAndGlyphs" >Grand Total</text>
<text x="943" y="472.23" font-size="13.7" fill="#000" font-weight="bold" text-anchor="end" >2205</text>
<text x="997" y="472.23" font-size="13.7" fill="#000" font-weight="bold" text-anchor="end" >546.48</text>
<text x="1060" y="472.23" font-size="13.7" fill="#000" font-weight="bold" text-anchor="end" >1398.34</text>
<text x="1123" y="472.23" font-size="13.7" fill="#000" font-weight="bold" text-anchor="end" >1804.51</text>
<text x="1208" y="472.23" font-size="13.7" fill="#000" font-weight="bold" text-anchor="end" >5954.33</text>
<rect x="927.5" y="224.5" width="17" height="17" fill="#f4f4f4" stroke="#c0c0c0" stroke-width="1" />
<path d="M932.5,231.5 L939.5,231.5 L936.0,235.5 Z" fill="#777"/>
<rect x="804.5" y="245.5" width="17" height="17" fill="#f4f4f4" stroke="#c0c0c0" stroke-width="1" />
<path d="M809.5,252.5 L816.5,252.5 L813.0,256.5 Z" fill="#777"/>
<text x="84.0" y="221.5" font-size="14" fill="#222" text-anchor="middle" >A</text>
<text x="207.0" y="221.5" font-size="14" fill="#222" text-anchor="middle" >B</text>
<text x="296.0" y="221.5" font-size="14" fill="#222" text-anchor="middle" >C</text>
<text x="355.5" y="221.5" font-size="14" fill="#222" text-anchor="middle" >D</text>
<text x="418.5" y="221.5" font-size="14" fill="#222" text-anchor="middle" >E</text>
<text x="492.5" y="221.5" font-size="14" fill="#222" text-anchor="middle" >F</text>
<text x="560.0" y="221.5" font-size="14" fill="#222" text-anchor="middle" >G</text>
<text x="604.0" y="221.5" font-size="14" fill="#222" text-anchor="middle" >H</text>
<rect x="1126.5" y="202" width="84.5" height="20" fill="#d2d2d2" />
<line x1="1126" y1="221" x2="1211" y2="221" stroke="#217346" stroke-width="2" />
<line x1="1126.5" y1="202" x2="1126.5" y2="222" stroke="#ababab" stroke-width="1" />
<line x1="1211.5" y1="202" x2="1211.5" y2="222" stroke="#ababab" stroke-width="1" />
<text x="760.5" y="218" font-size="14" fill="#222" text-anchor="middle" >A</text>
<text x="884.0" y="218" font-size="14" fill="#222" text-anchor="middle" >B</text>
<text x="973.0" y="218" font-size="14" fill="#222" text-anchor="middle" >C</text>
<text x="1031.5" y="218" font-size="14" fill="#222" text-anchor="middle" >D</text>
<text x="1094.5" y="218" font-size="14" fill="#222" text-anchor="middle" >E</text>
<text x="1168.5" y="218" font-size="14" fill="#217346" text-anchor="middle" >F</text>
<text x="1236.0" y="218" font-size="14" fill="#222" text-anchor="middle" >G</text>
<text x="1279.5" y="218" font-size="14" fill="#222" text-anchor="middle" >H</text>
<path d="M5,222 L19,222 L19,209 Z" fill="#b4b4b4"/>
<path d="M683,218 L696,218 L696,205 Z" fill="#b4b4b4"/>
<text x="8" y="242.4" font-size="14" fill="#222" text-anchor="middle" >1</text>
<text x="8" y="263.627" font-size="14" fill="#222" text-anchor="middle" >2</text>
<text x="8" y="284.854" font-size="14" fill="#222" text-anchor="middle" >3</text>
<text x="8" y="306.081" font-size="14" fill="#222" text-anchor="middle" >4</text>
<text x="8" y="327.308" font-size="14" fill="#222" text-anchor="middle" >5</text>
<text x="8" y="348.535" font-size="14" fill="#222" text-anchor="middle" >6</text>
<text x="8" y="369.762" font-size="14" fill="#222" text-anchor="middle" >7</text>
<text x="8" y="390.98900000000003" font-size="14" fill="#222" text-anchor="middle" >8</text>
<text x="8" y="412.216" font-size="14" fill="#222" text-anchor="middle" >9</text>
<text x="8" y="433.443" font-size="14" fill="#222" text-anchor="middle" >10</text>
<text x="8" y="454.67" font-size="14" fill="#222" text-anchor="middle" >11</text>
<text x="8" y="475.89700000000005" font-size="14" fill="#222" text-anchor="middle" >12</text>
<text x="8" y="497.124" font-size="14" fill="#222" text-anchor="middle" >13</text>
<text x="8" y="518.351" font-size="14" fill="#222" text-anchor="middle" >14</text>
<text x="8" y="539.578" font-size="14" fill="#222" text-anchor="middle" >15</text>
<text x="8" y="560.8050000000001" font-size="14" fill="#222" text-anchor="middle" >16</text>
<text x="8" y="582.032" font-size="14" fill="#222" text-anchor="middle" >17</text>
<text x="8" y="603.259" font-size="14" fill="#222" text-anchor="middle" >18</text>
<text x="8" y="624.486" font-size="14" fill="#222" text-anchor="middle" >19</text>
<text x="8" y="645.713" font-size="14" fill="#222" text-anchor="middle" >20</text>
<text x="8" y="666.94" font-size="14" fill="#222" text-anchor="middle" >21</text>
<text x="8" y="688.167" font-size="14" fill="#222" text-anchor="middle" >22</text>
<text x="8" y="709.394" font-size="14" fill="#222" text-anchor="middle" >23</text>
<text x="8" y="730.621" font-size="14" fill="#222" text-anchor="middle" >24</text>
<text x="8" y="751.848" font-size="14" fill="#222" text-anchor="middle" >25</text>
<text x="8" y="773.0749999999999" font-size="14" fill="#222" text-anchor="middle" >26</text>
<text x="8" y="794.302" font-size="14" fill="#222" text-anchor="middle" >27</text>
<rect x="669" y="372" width="30" height="20" fill="#d2d2d2" />
<line x1="698" y1="372" x2="698" y2="392" stroke="#217346" stroke-width="2" />
<text x="684.5" y="238.6" font-size="14" fill="#222" text-anchor="middle" >1</text>
<text x="684.5" y="259.83" font-size="14" fill="#222" text-anchor="middle" >2</text>
<text x="684.5" y="281.06" font-size="14" fill="#222" text-anchor="middle" >3</text>
<text x="684.5" y="302.28999999999996" font-size="14" fill="#222" text-anchor="middle" >4</text>
<text x="684.5" y="323.52" font-size="14" fill="#222" text-anchor="middle" >5</text>
<text x="684.5" y="344.75" font-size="14" fill="#222" text-anchor="middle" >6</text>
<text x="684.5" y="365.98" font-size="14" fill="#222" text-anchor="middle" >7</text>
<text x="684.5" y="387.21000000000004" font-size="14" fill="#217346" text-anchor="middle" >8</text>
<text x="684.5" y="408.44" font-size="14" fill="#222" text-anchor="middle" >9</text>
<text x="684.5" y="429.66999999999996" font-size="14" fill="#222" text-anchor="middle" >10</text>
<text x="684.5" y="450.9" font-size="14" fill="#222" text-anchor="middle" >11</text>
<text x="684.5" y="472.13" font-size="14" fill="#222" text-anchor="middle" >12</text>
<text x="684.5" y="493.36" font-size="14" fill="#222" text-anchor="middle" >13</text>
<text x="684.5" y="514.59" font-size="14" fill="#222" text-anchor="middle" >14</text>
<text x="684.5" y="535.82" font-size="14" fill="#222" text-anchor="middle" >15</text>
<text x="684.5" y="557.05" font-size="14" fill="#222" text-anchor="middle" >16</text>
<text x="684.5" y="578.28" font-size="14" fill="#222" text-anchor="middle" >17</text>
<text x="684.5" y="599.51" font-size="14" fill="#222" text-anchor="middle" >18</text>
<text x="684.5" y="620.74" font-size="14" fill="#222" text-anchor="middle" >19</text>
<text x="684.5" y="641.97" font-size="14" fill="#222" text-anchor="middle" >20</text>
<text x="684.5" y="663.2" font-size="14" fill="#222" text-anchor="middle" >21</text>
<text x="684.5" y="684.43" font-size="14" fill="#222" text-anchor="middle" >22</text>
<text x="684.5" y="705.66" font-size="14" fill="#222" text-anchor="middle" >23</text>
<text x="684.5" y="726.89" font-size="14" fill="#222" text-anchor="middle" >24</text>
<text x="684.5" y="748.12" font-size="14" fill="#222" text-anchor="middle" >25</text>
<text x="684.5" y="769.35" font-size="14" fill="#222" text-anchor="middle" >26</text>
<text x="684.5" y="790.58" font-size="14" fill="#222" text-anchor="middle" >27</text>
<rect x="1126" y="371" width="85" height="22" fill="none" stroke="#217346" stroke-width="2" />
<rect x="1207" y="389" width="7" height="7" fill="#ffffff" />
<rect x="1208" y="390" width="5" height="5" fill="#217346" />
<rect x="643" y="206" width="22" height="586" fill="#e9e9e9" />
<line x1="642.5" y1="226" x2="642.5" y2="792" stroke="#ababab" stroke-width="1" />
<rect x="646" y="207.5" width="15" height="16" fill="#ffffff" stroke="#d0d0d0" stroke-width="1" />
<path d="M649.5,218 L657.5,218 L653.5,213.5 Z" fill="#777"/>
<rect x="646" y="225" width="15" height="529.5" fill="#ffffff" stroke="#c8c8c8" stroke-width="1" />
<rect x="646" y="777" width="15" height="20" fill="#ffffff" stroke="#d0d0d0" stroke-width="1" />
<path d="M649.5,783 L657.5,783 L653.5,787.5 Z" fill="#777"/>
<g transform="translate(16,5)"><path d="M0.8,0.8 H13.2 V14.2 H0.8 Z" fill="none" stroke="#ffffff" stroke-width="1.6"/><rect x="3" y="10" width="8" height="4.2" fill="#ffffff"/><rect x="5" y="11" width="1.3" height="3" fill="#217346"/><rect x="8" y="11" width="1.3" height="3" fill="#217346"/></g>
<g transform="translate(48,5)"><path d="M4,3 L1,6.5 L4,10 M1.5,6.5 H9 A4.5,4.5 0 0 1 9,15.5 H7.5" fill="none" stroke="#5f9c78" stroke-width="2"/></g>
<path d="M69.0,8.25 L75.0,8.25 L72,11.75 Z" fill="#5f9c78"/>
<g transform="translate(86,5) translate(15,0) scale(-1,1)"><path d="M4,3 L1,6.5 L4,10 M1.5,6.5 H9 A4.5,4.5 0 0 1 9,15.5 H7.5" fill="none" stroke="#5f9c78" stroke-width="2"/></g>
<path d="M108.0,8.25 L114.0,8.25 L111,11.75 Z" fill="#5f9c78"/>
<rect x="128.5" y="9" width="6" height="1.2" fill="#ffffff"/>
<path d="M128.5,11.25 L134.5,11.25 L131.5,14.75 Z" fill="#ffffff"/>
<g transform="translate(693,2)"><path d="M0.8,0.8 H13.2 V14.2 H0.8 Z" fill="none" stroke="#ffffff" stroke-width="1.6"/><rect x="3" y="10" width="8" height="4.2" fill="#ffffff"/><rect x="5" y="11" width="1.3" height="3" fill="#217346"/><rect x="8" y="11" width="1.3" height="3" fill="#217346"/></g>
<g transform="translate(725,2)"><path d="M4,3 L1,6.5 L4,10 M1.5,6.5 H9 A4.5,4.5 0 0 1 9,15.5 H7.5" fill="none" stroke="#5f9c78" stroke-width="2"/></g>
<path d="M746.0,5.25 L752.0,5.25 L749,8.75 Z" fill="#5f9c78"/>
<g transform="translate(763,2) translate(15,0) scale(-1,1)"><path d="M4,3 L1,6.5 L4,10 M1.5,6.5 H9 A4.5,4.5 0 0 1 9,15.5 H7.5" fill="none" stroke="#5f9c78" stroke-width="2"/></g>
<path d="M785.0,5.25 L791.0,5.25 L788,8.75 Z" fill="#5f9c78"/>
<rect x="805.5" y="6" width="6" height="1.2" fill="#ffffff"/>
<path d="M805.5,8.25 L811.5,8.25 L808.5,11.75 Z" fill="#ffffff"/>
<text x="291.3" y="19.5" font-size="13" fill="#b7d5c2" textLength="72" lengthAdjust="spacingAndGlyphs" >a.xlsx - Excel</text>
<text x="1012" y="16.5" font-size="13" fill="#ffffff" textLength="84.5" lengthAdjust="spacingAndGlyphs" >out.xlsx - Excel</text>
<g stroke="#6fa585" fill="none" stroke-width="1"><rect x="484.5" y="7.5" width="11" height="10"/><path d="M484.5,9.5 H495.5 M490,16.5 V11 M487.5,13.5 L490,11 L492.5,13.5"/><path d="M535,12.5 H545"/><rect x="584.5" y="7.5" width="10" height="10"/><path d="M634,7 L645,18 M645,7 L634,18"/></g>
<text x="15" y="50.4" font-size="13" fill="#ffffff" textLength="20" lengthAdjust="spacingAndGlyphs" >File</text>
<clipPath id="lt"><rect x="60" y="30" width="350" height="28"/></clipPath>
<clipPath id="lc0"><rect x="61" y="30" width="29.299999999999997" height="28"/></clipPath>
<g clip-path="url(#lc0)">
<text x="63" y="49.7" font-size="13" fill="#ffffff" textLength="38" lengthAdjust="spacingAndGlyphs" >Home</text>
</g>
<clipPath id="lc1"><rect x="94.8" y="30" width="30.299999999999997" height="28"/></clipPath>
<g clip-path="url(#lc1)">
<text x="98" y="49.7" font-size="13" fill="#ffffff" textLength="32" lengthAdjust="spacingAndGlyphs" >Insert</text>
</g>
<clipPath id="lc2"><rect x="129.6" y="30" width="30.30000000000001" height="28"/></clipPath>
<g clip-path="url(#lc2)">
<text x="133.2" y="49.7" font-size="13" fill="#ffffff" textLength="26.80000000000001" lengthAdjust="spacingAndGlyphs" >Page</text>
</g>
<clipPath id="lc3"><rect x="164.4" y="30" width="30.69999999999999" height="28"/></clipPath>
<g clip-path="url(#lc3)">
<text x="168" y="49.7" font-size="13" fill="#ffffff" textLength="62" lengthAdjust="spacingAndGlyphs" >Formulas</text>
</g>
<clipPath id="lc4"><rect x="199.6" y="30" width="30.599999999999994" height="28"/></clipPath>
<g clip-path="url(#lc4)">
<text x="203.2" y="49.7" font-size="13" fill="#ffffff" textLength="27.0" lengthAdjust="spacingAndGlyphs" >Data</text>
</g>
<clipPath id="lc5"><rect x="234.7" y="30" width="30.5" height="28"/></clipPath>
<g clip-path="url(#lc5)">
<text x="238.4" y="49.7" font-size="13" fill="#ffffff" textLength="42.599999999999994" lengthAdjust="spacingAndGlyphs" >Review</text>
</g>
<clipPath id="lc6"><rect x="269.7" y="30" width="30.600000000000023" height="28"/></clipPath>
<g clip-path="url(#lc6)">
<text x="272.8" y="49.7" font-size="13" fill="#ffffff" textLength="27.5" lengthAdjust="spacingAndGlyphs" >View</text>
</g>
<clipPath id="lc7"><rect x="304.8" y="30" width="30.5" height="28"/></clipPath>
<g clip-path="url(#lc7)">
<text x="308.2" y="49.7" font-size="13" fill="#ffffff" textLength="48.80000000000001" lengthAdjust="spacingAndGlyphs" >Develop</text>
</g>
<clipPath id="lc8"><rect x="339.8" y="30" width="30.599999999999966" height="28"/></clipPath>
<g clip-path="url(#lc8)">
<text x="343" y="49.7" font-size="13" fill="#ffffff" textLength="27.30000000000001" lengthAdjust="spacingAndGlyphs" >Load</text>
</g>
<line x1="94.3" y1="35" x2="94.3" y2="55" stroke="#a3c6b0" stroke-width="1" />
<line x1="129.1" y1="35" x2="129.1" y2="55" stroke="#a3c6b0" stroke-width="1" />
<line x1="163.9" y1="35" x2="163.9" y2="55" stroke="#a3c6b0" stroke-width="1" />
<line x1="199.1" y1="35" x2="199.1" y2="55" stroke="#a3c6b0" stroke-width="1" />
<line x1="234.2" y1="35" x2="234.2" y2="55" stroke="#a3c6b0" stroke-width="1" />
<line x1="269.2" y1="35" x2="269.2" y2="55" stroke="#a3c6b0" stroke-width="1" />
<line x1="304.3" y1="35" x2="304.3" y2="55" stroke="#a3c6b0" stroke-width="1" />
<line x1="339.3" y1="35" x2="339.3" y2="55" stroke="#a3c6b0" stroke-width="1" />
<line x1="374.4" y1="35" x2="374.4" y2="55" stroke="#a3c6b0" stroke-width="1" />
<line x1="409.3" y1="35" x2="409.3" y2="55" stroke="#a3c6b0" stroke-width="1" />
<line x1="481.0" y1="35" x2="481.0" y2="55" stroke="#a3c6b0" stroke-width="1" />
<path transform="translate(378.5,39) scale(0.9259259259259259)" d="M1,3 H5 M3,0 V12 M0,8 L5,6 M6,2 H12 M9,0 V5 M6,5 H12 M6,8 H12 M10,6 V12 L8,11 M7,9 L8,10" fill="none" stroke="#e8f0ea" stroke-width="1.2"/>
<path transform="translate(391.0,39) scale(0.9259259259259259)" d="M3,0 L1,3 M2,2 H9 L7,5 M1,5 H11 V9 H1 Z M6,5 V9 M1,9 V12 H11 V11" fill="none" stroke="#e8f0ea" stroke-width="1.2"/>
<rect x="412" y="32" width="33" height="26" fill="#f1f1f1" />
<clipPath id="anc"><rect x="413" y="30" width="29" height="28"/></clipPath><g clip-path="url(#anc)">
<text x="415" y="49.7" font-size="13" fill="#217346" textLength="44" lengthAdjust="spacingAndGlyphs" >Analyze</text>
</g>
<rect x="445" y="32" width="35" height="26" fill="#1b5e38" />
<clipPath id="dsc"><rect x="446" y="30" width="33" height="28"/></clipPath><g clip-path="url(#dsc)">
<text x="449" y="49.7" font-size="13" fill="#ffffff" textLength="40" lengthAdjust="spacingAndGlyphs" >Design</text>
</g>
<g fill="none" stroke="#d9e8de" stroke-width="1.2"><path d="M493.5,48 C493.5,44 491,43 491,40.5 A5,5 0 0 1 501,40.5 C501,43 498.5,44 498.5,48 Z"/><path d="M494,50.5 H498 M494.5,52.5 H497.5"/></g>
<text x="508.8" y="49.7" font-size="13" fill="#e8f0ea" textLength="42" lengthAdjust="spacingAndGlyphs" >Tell me</text>
<text x="561" y="49.7" font-size="13" fill="#ffffff" textLength="38.5" lengthAdjust="spacingAndGlyphs" >Sign in</text>
<rect x="609" y="32" width="42" height="26" fill="#1b5e38" />
<g fill="none" stroke="#ffffff" stroke-width="1.2"><circle cx="620" cy="40" r="4.2"/><path d="M613.5,52 C613.5,47 616,45 620,45 C622,45 623.5,45.5 624.5,46.5 M625,47 V53 M622,50 H628"/></g>
<clipPath id="shc"><rect x="630" y="30" width="21" height="28"/></clipPath><g clip-path="url(#shc)">
<text x="633.5" y="49.7" font-size="13" fill="#ffffff" textLength="33" lengthAdjust="spacingAndGlyphs" >Share</text>
</g>
<rect x="651" y="32.3" width="13.6" height="26" fill="#f7f7f7" />
<path d="M655.5,41 L660,45 L655.5,49 Z" fill="#666"/>
<text x="691" y="45.6" font-size="13" fill="#ffffff" textLength="20" lengthAdjust="spacingAndGlyphs" >File</text>
<rect x="736.4" y="28.4" width="45.2" height="26.2" fill="#f1f1f1" />
<text x="741.5" y="45.6" font-size="13" fill="#217346" textLength="35.5" lengthAdjust="spacingAndGlyphs" >Home</text>
<text x="787.3" y="45.6" font-size="13" fill="#ffffff" textLength="30.90000000000009" lengthAdjust="spacingAndGlyphs" >Insert</text>
<text x="828.6" y="45.6" font-size="13" fill="#ffffff" textLength="69.89999999999998" lengthAdjust="spacingAndGlyphs" >Page Layout</text>
<text x="908.3" y="45.6" font-size="13" fill="#ffffff" textLength="52.0" lengthAdjust="spacingAndGlyphs" >Formulas</text>
<text x="970.7" y="45.6" font-size="13" fill="#ffffff" textLength="26.799999999999955" lengthAdjust="spacingAndGlyphs" >Data</text>
<text x="1008" y="45.6" font-size="13" fill="#ffffff" textLength="40.799999999999955" lengthAdjust="spacingAndGlyphs" >Review</text>
<text x="1058" y="45.6" font-size="13" fill="#ffffff" textLength="28" lengthAdjust="spacingAndGlyphs" >View</text>
<text x="1096.5" y="45.6" font-size="13" fill="#ffffff" textLength="60.0" lengthAdjust="spacingAndGlyphs" >Developer</text>
<text x="1166.7" y="45.6" font-size="13" fill="#ffffff" textLength="54.09999999999991" lengthAdjust="spacingAndGlyphs" >Load Test</text>
<line x1="824.0" y1="31" x2="824.0" y2="51" stroke="#a3c6b0" stroke-width="1" />
<line x1="904.0" y1="31" x2="904.0" y2="51" stroke="#a3c6b0" stroke-width="1" />
<line x1="966.1" y1="31" x2="966.1" y2="51" stroke="#a3c6b0" stroke-width="1" />
<line x1="1003.7" y1="31" x2="1003.7" y2="51" stroke="#a3c6b0" stroke-width="1" />
<line x1="1054.5" y1="31" x2="1054.5" y2="51" stroke="#a3c6b0" stroke-width="1" />
<line x1="1092.0" y1="31" x2="1092.0" y2="51" stroke="#a3c6b0" stroke-width="1" />
<line x1="1162.5" y1="31" x2="1162.5" y2="51" stroke="#a3c6b0" stroke-width="1" />
<line x1="1227.2" y1="31" x2="1227.2" y2="51" stroke="#a3c6b0" stroke-width="1" />
<line x1="1288.5" y1="31" x2="1288.5" y2="51" stroke="#a3c6b0" stroke-width="1" />
<path transform="translate(1231.5,35) scale(0.9629629629629629)" d="M1,3 H5 M3,0 V12 M0,8 L5,6 M6,2 H12 M9,0 V5 M6,5 H12 M6,8 H12 M10,6 V12 L8,11 M7,9 L8,10" fill="none" stroke="#ffffff" stroke-width="1.2"/>
<path transform="translate(1244.5,35) scale(0.9629629629629629)" d="M3,0 L1,3 M2,2 H9 L7,5 M1,5 H11 V9 H1 Z M6,5 V9 M1,9 V12 H11 V11" fill="none" stroke="#ffffff" stroke-width="1.2"/>
<path transform="translate(1257.5,35) scale(0.9629629629629629)" d="M0,2 H6 M3,2 V10 L0,11 L6,9 M6,4 H12 V11 L10,12 M9,0 V5 L6,12" fill="none" stroke="#ffffff" stroke-width="1.2"/>
<path transform="translate(1270.5,35) scale(0.9629629629629629)" d="M3,0 L1,4 H6 L5,2 M1,6 H6 V12 M1,6 V12 M1,8 H6 M1,10 H6 M8,0 V4 H12 M8,6 V11 H12 V9" fill="none" stroke="#ffffff" stroke-width="1.2"/>
<text x="1299" y="45.6" font-size="13" fill="#ffffff" >A</text>
<rect x="8.5" y="62.8" width="31.5" height="32.2" fill="#f8f8f8" stroke="#d6d6d6" stroke-width="1" />
<rect x="64.5" y="62.8" width="31.599999999999994" height="32.2" fill="#f8f8f8" stroke="#d6d6d6" stroke-width="1" />
<rect x="109.5" y="62.8" width="32" height="32.2" fill="#f8f8f8" stroke="#d6d6d6" stroke-width="1" />
<rect x="155.3" y="62.8" width="31.799999999999983" height="32.2" fill="#f8f8f8" stroke="#d6d6d6" stroke-width="1" />
<rect x="337.5" y="62.8" width="31.5" height="32.2" fill="#f8f8f8" stroke="#d6d6d6" stroke-width="1" />
<rect x="399.8" y="62.8" width="31.599999999999966" height="32.2" fill="#f8f8f8" stroke="#d6d6d6" stroke-width="1" />
<rect x="460.5" y="62.8" width="32" height="32.2" fill="#f8f8f8" stroke="#d6d6d6" stroke-width="1" />
<rect x="506.0" y="62.8" width="32.299999999999955" height="32.2" fill="#f8f8f8" stroke="#d6d6d6" stroke-width="1" />
<line x1="58.5" y1="62" x2="58.5" y2="153" stroke="#d7d7d7" stroke-width="1" />
<line x1="104.1" y1="62" x2="104.1" y2="153" stroke="#d7d7d7" stroke-width="1" />
<line x1="149.2" y1="62" x2="149.2" y2="153" stroke="#d7d7d7" stroke-width="1" />
<line x1="195.0" y1="62" x2="195.0" y2="153" stroke="#d7d7d7" stroke-width="1" />
<line x1="329.8" y1="62" x2="329.8" y2="153" stroke="#d7d7d7" stroke-width="1" />
<line x1="378.9" y1="62" x2="378.9" y2="153" stroke="#d7d7d7" stroke-width="1" />
<line x1="455.0" y1="62" x2="455.0" y2="153" stroke="#d7d7d7" stroke-width="1" />
<line x1="500.1" y1="62" x2="500.1" y2="153" stroke="#d7d7d7" stroke-width="1" />
<line x1="545.9" y1="62" x2="545.9" y2="153" stroke="#d7d7d7" stroke-width="1" />
<text x="-3" y="113" font-size="12.8" fill="#333333" textLength="57.5" lengthAdjust="spacingAndGlyphs" >PivotTable</text>
<path d="M21.5,123.5 L28.5,123.5 L25,127.5 Z" fill="#777"/>
<text x="63.5" y="113" font-size="12.8" fill="#333333" textLength="35" lengthAdjust="spacingAndGlyphs" >Active</text>
<text x="63.5" y="130.6" font-size="12.8" fill="#333333" textLength="25.5" lengthAdjust="spacingAndGlyphs" >Field</text>
<path d="M93.5,123.5 L100.5,123.5 L97,127.5 Z" fill="#777"/>
<text x="108.5" y="113" font-size="12.8" fill="#333333" textLength="35.5" lengthAdjust="spacingAndGlyphs" >Group</text>
<path d="M122.5,123.5 L129.5,123.5 L126,127.5 Z" fill="#777"/>
<text x="157.5" y="113" font-size="12.8" fill="#333333" textLength="28.5" lengthAdjust="spacingAndGlyphs" >Filter</text>
<path d="M168.5,123.5 L175.5,123.5 L172,127.5 Z" fill="#777"/>
<text x="200.4" y="114.6" font-size="12.8" fill="#333333" textLength="42.3" lengthAdjust="spacingAndGlyphs" >Refresh</text>
<path d="M218.5,125.0 L225.5,125.0 L222,129.0 Z" fill="#777"/>
<text x="247.3" y="114.6" font-size="12.8" fill="#333333" textLength="74.7" lengthAdjust="spacingAndGlyphs" >Change Data</text>
<text x="261.8" y="132" font-size="12.8" fill="#333333" textLength="38.5" lengthAdjust="spacingAndGlyphs" >Source</text>
<path d="M303.5,124.5 L310.5,124.5 L307,128.5 Z" fill="#777"/>
<text x="250.8" y="152" font-size="12" fill="#555" textLength="22.5" lengthAdjust="spacingAndGlyphs" >Data</text>
<text x="332" y="113.6" font-size="12.8" fill="#333333" textLength="43.3" lengthAdjust="spacingAndGlyphs" >Actions</text>
<path d="M350.5,123.5 L357.5,123.5 L354,127.5 Z" fill="#777"/>
<text x="381.5" y="113.6" font-size="12.8" fill="#333333" textLength="69.5" lengthAdjust="spacingAndGlyphs" >Calculations</text>
<path d="M412.5,123.5 L419.5,123.5 L416,127.5 Z" fill="#777"/>
<text x="461.7" y="113.6" font-size="12.8" fill="#333333" textLength="30.8" lengthAdjust="spacingAndGlyphs" >Tools</text>
<path d="M473.5,123.5 L480.5,123.5 L477,127.5 Z" fill="#777"/>
<text x="507.2" y="113.6" font-size="12.8" fill="#333333" textLength="31.5" lengthAdjust="spacingAndGlyphs" >Show</text>
<path d="M519.5,123.5 L526.5,123.5 L523,127.5 Z" fill="#777"/>
<path d="M646,150 L650,146 L654,150" fill="none" stroke="#555" stroke-width="1.3"/>
<rect x="-1.5" y="168.9" width="109.4" height="25.19999999999999" fill="#ffffff" stroke="#c6c6c6" stroke-width="1" />
<rect x="142.2" y="168.9" width="118.30000000000001" height="25.19999999999999" fill="#ffffff" stroke="#c6c6c6" stroke-width="1" />
<rect x="264.7" y="168.9" width="393.8" height="25.19999999999999" fill="#ffffff" stroke="#c6c6c6" stroke-width="1" />
<text x="3" y="187.0" font-size="14" fill="#333" >F8</text>
<path d="M94.9,179.5 L101.9,179.5 L98.4,183.5 Z" fill="#555"/>
<rect x="124.4" y="175.5" width="2" height="2.5" fill="#9a9a9a" />
<rect x="124.4" y="180.5" width="2" height="2.5" fill="#9a9a9a" />
<rect x="124.4" y="185.5" width="2" height="2.5" fill="#9a9a9a" />
<path d="M154.7,175.5 L166.7,187.5 M166.7,175.5 L154.7,187.5" stroke="#aaa" stroke-width="1.3"/>
<path d="M193.7,181.5 L197.7,186.5 L206.7,175.5" fill="none" stroke="#bbb" stroke-width="2"/>
<text x="232.7" y="186.5" font-size="16" fill="#555" stroke="#555" stroke-width="0.4" font-style="italic" font-family="Liberation Serif">fx</text>
<text x="276.7" y="187.0" font-size="14" fill="#333" textLength="40" lengthAdjust="spacingAndGlyphs" >154.06</text>
<path d="M646.0,179.0 L650.5,183.5 L655.0,179.0" fill="none" stroke="#555" stroke-width="1.8"/>
<rect x="675.3" y="166.3" width="109.40000000000009" height="24.399999999999977" fill="#ffffff" stroke="#c6c6c6" stroke-width="1" />
<rect x="819.1" y="166.3" width="117.69999999999993" height="24.399999999999977" fill="#ffffff" stroke="#c6c6c6" stroke-width="1" />
<rect x="941.3" y="166.3" width="378.20000000000005" height="24.399999999999977" fill="#ffffff" stroke="#c6c6c6" stroke-width="1" />
<text x="679.8" y="184.0" font-size="14" fill="#333" >F8</text>
<path d="M771.7,176.5 L778.7,176.5 L775.2,180.5 Z" fill="#555"/>
<rect x="801.2" y="172.5" width="2" height="2.5" fill="#9a9a9a" />
<rect x="801.2" y="177.5" width="2" height="2.5" fill="#9a9a9a" />
<rect x="801.2" y="182.5" width="2" height="2.5" fill="#9a9a9a" />
<path d="M831.6,172.5 L843.6,184.5 M843.6,172.5 L831.6,184.5" stroke="#aaa" stroke-width="1.3"/>
<path d="M870.6,178.5 L874.6,183.5 L883.6,172.5" fill="none" stroke="#bbb" stroke-width="2"/>
<text x="909.6" y="183.5" font-size="16" fill="#555" stroke="#555" stroke-width="0.4" font-style="italic" font-family="Liberation Serif">fx</text>
<text x="953.3" y="184.0" font-size="14" fill="#333" textLength="40" lengthAdjust="spacingAndGlyphs" >154.06</text>
<line x1="756.5" y1="59" x2="756.5" y2="150" stroke="#d7d7d7" stroke-width="1" />
<line x1="962.0" y1="59" x2="962.0" y2="150" stroke="#d7d7d7" stroke-width="1" />
<line x1="1129.0" y1="59" x2="1129.0" y2="150" stroke="#d7d7d7" stroke-width="1" />
<line x1="1216.1" y1="59" x2="1216.1" y2="150" stroke="#d7d7d7" stroke-width="1" />
<line x1="843.5" y1="103" x2="843.5" y2="121" stroke="#d7d7d7" stroke-width="1" />
<line x1="885.5" y1="103" x2="885.5" y2="121" stroke="#d7d7d7" stroke-width="1" />
<line x1="1086.3" y1="71" x2="1086.3" y2="120" stroke="#d7d7d7" stroke-width="1" />
<g><rect x="682" y="65" width="24" height="29" rx="1.5" fill="#e8c27c"/><path d="M688,63 H700 V67 H688 Z" fill="#7a7a7a"/><circle cx="694" cy="62.5" r="2.5" fill="#7a7a7a"/><path d="M699,78 H708 L712,82 V96 H699 Z" fill="#ffffff" stroke="#777" stroke-width="1"/></g>
<text x="679.8" y="111" font-size="12.8" fill="#333333" textLength="29.5" lengthAdjust="spacingAndGlyphs" >Paste</text>
<path d="M691.0,121.5 L698.0,121.5 L694.5,125.5 Z" fill="#777"/>
<g fill="none" stroke="#4a86c5" stroke-width="1.2"><circle cx="723" cy="74.5" r="2.6"/><circle cx="730.5" cy="74.5" r="2.6"/></g><path d="M722,62.5 L729.5,72.5 M731.5,62.5 L724,72.5" stroke="#666" stroke-width="1.3"/>
<g fill="#fff" stroke="#777" stroke-width="1"><path d="M720.5,87.5 H727 L729,89.5 V99.5 H720.5 Z"/><path d="M725.5,92.5 H732 L734,94.5 V104.5 H725.5 Z"/></g><path d="M722,91 H726 M722,93 H726 M727,97 H732 M727,99 H732 M727,101 H732" stroke="#4a86c5" stroke-width="1"/>
<path d="M741.5,92.75 L747.5,92.75 L744.5,96.25 Z" fill="#777"/>
<path d="M721,122 L728,115 L732,119 L725,126 Z" fill="#e8c27c"/><path d="M729,114 L733,110 L737,114 L733,118 Z" fill="#666"/>
<text x="678.4" y="147.8" font-size="12" fill="#555" textLength="49.6" lengthAdjust="spacingAndGlyphs" >Clipboard</text>
<path d="M743.5,149 V143.5 H749" fill="none" stroke="#999" stroke-width="1"/><path d="M746,146 L750.5,150.5 M750.5,147 V150.5 H747" fill="none" stroke="#777" stroke-width="1.1"/>
<rect x="759.5" y="67.5" width="99" height="23.5" fill="#ffffff" stroke="#c6c6c6" stroke-width="1" />
<text x="765" y="84.5" font-size="13.5" fill="#333" textLength="38.5" lengthAdjust="spacingAndGlyphs" >Calibri</text>
<path d="M848.0,76.5 L855.0,76.5 L851.5,80.5 Z" fill="#555"/>
<rect x="859" y="67.5" width="52.5" height="23.5" fill="#ffffff" stroke="#c6c6c6" stroke-width="1" />
<text x="862" y="84.5" font-size="13.5" fill="#333" >11</text>
<path d="M901.0,76.5 L908.0,76.5 L904.5,80.5 Z" fill="#555"/>
<text x="918.5" y="85.5" font-size="13" fill="#555" textLength="11.5" lengthAdjust="spacingAndGlyphs" >A</text>
<path d="M926,74 L928,71 L930,74 Z" fill="#3c7fc4"/>
<text x="940" y="85.5" font-size="12" fill="#555" textLength="11" lengthAdjust="spacingAndGlyphs" >A</text>
<path d="M947,72 L949,75 L951,72 Z" fill="#3c7fc4"/>
<text x="765.5" y="117" font-size="14" fill="#444" font-weight="bold" >B</text>
<text x="788.5" y="117" font-size="14" fill="#444" font-style="italic" font-family="Liberation Serif">I</text>
<text x="811.5" y="116" font-size="13.5" fill="#444" >U</text>
<line x1="811" y1="119.5" x2="821" y2="119.5" stroke="#444" stroke-width="1.2" />
<path d="M830.0,109.75 L836.0,109.75 L833,113.25 Z" fill="#777"/>
<g stroke="#888" stroke-width="1" stroke-dasharray="1.3,1.3" fill="none"><rect x="850.5" y="103.5" width="15" height="15"/><path d="M858,103.5 V118.5 M850.5,111 H865.5"/></g>
<line x1="850" y1="119.5" x2="866" y2="119.5" stroke="#666" stroke-width="1.2" />
<path d="M872.0,109.75 L878.0,109.75 L875,113.25 Z" fill="#777"/>
<path d="M894,109 L900,103 L906,109 L900,115 Z" fill="#fff" stroke="#666" stroke-width="1.1"/><path d="M905,108 C907,110 907,112 906,113" stroke="#3c7fc4" stroke-width="1.6" fill="none"/>
<rect x="891" y="116" width="18" height="5" fill="#ffff00" />
<path d="M914.0,109.75 L920.0,109.75 L917,113.25 Z" fill="#777"/>
<text x="925.5" y="114" font-size="14" fill="#444" textLength="14" lengthAdjust="spacingAndGlyphs" >A</text>
<rect x="925" y="116" width="18" height="5" fill="#ff0000" />
<path d="M948.0,109.75 L954.0,109.75 L951,113.25 Z" fill="#777"/>
<text x="839" y="147.8" font-size="12" fill="#555" textLength="21.6" lengthAdjust="spacingAndGlyphs" >Font</text>
<path d="M950.5,149 V143.5 H956" fill="none" stroke="#999" stroke-width="1"/><path d="M953,146 L957.5,150.5 M957.5,147 V150.5 H954" fill="none" stroke="#777" stroke-width="1.1"/>
<rect x="968" y="71" width="16" height="1.1" fill="#666"/>
<rect x="968" y="74" width="16" height="1.1" fill="#666"/>
<rect x="1010.5" y="67.6" width="23" height="23.5" fill="#c8c8c8" />
<rect x="991" y="74" width="16" height="1.1" fill="#666"/>
<rect x="992" y="77" width="14" height="1.1" fill="#666"/>
<rect x="993" y="80" width="12" height="1.1" fill="#666"/>
<rect x="1014" y="78" width="16" height="1.1" fill="#666"/>
<rect x="1015" y="81" width="14" height="1.1" fill="#666"/>
<rect x="1016" y="84" width="12" height="1.1" fill="#666"/>
<g transform="translate(1039,71)"><path d="M5,15.5 L15,5.5 M11,5 H15.5 V9.5" fill="none" stroke="#555" stroke-width="1.2"/><text x="0" y="0" font-size="11" fill="#555" transform="translate(2,13) rotate(-45)">ab</text></g>
<path d="M1059.0,76.75 L1065.0,76.75 L1062,80.25 Z" fill="#777"/>
<rect x="968" y="106" width="13" height="1.1" fill="#666"/>
<rect x="968" y="109" width="10" height="1.1" fill="#666"/>
<rect x="968" y="112" width="13" height="1.1" fill="#666"/>
<rect x="968" y="115" width="10" height="1.1" fill="#666"/>
<rect x="991" y="106" width="13" height="1.1" fill="#666"/>
<rect x="992.5" y="109" width="10" height="1.1" fill="#666"/>
<rect x="991" y="112" width="13" height="1.1" fill="#666"/>
<rect x="992.5" y="115" width="10" height="1.1" fill="#666"/>
<rect x="1013" y="106" width="13" height="1.1" fill="#666"/>
<rect x="1016" y="109" width="10" height="1.1" fill="#666"/>
<rect x="1013" y="112" width="13" height="1.1" fill="#666"/>
<rect x="1016" y="115" width="10" height="1.1" fill="#666"/>
<rect x="1039" y="104.5" width="16" height="1.1" fill="#888"/><rect x="1039" y="117.8" width="16" height="1.1" fill="#666"/>
<rect x="1047" y="107.3" width="8" height="1.1" fill="#888"/>
<rect x="1047" y="110" width="8" height="1.1" fill="#888"/>
<rect x="1047" y="112.6" width="8" height="1.1" fill="#888"/>
<rect x="1047" y="115.2" width="8" height="1.1" fill="#888"/>
<path d="M1046,111.5 H1040 M1043,108.5 L1040,111.5 L1043,114.5" fill="none" stroke="#3c7fc4" stroke-width="1.8"/>
<rect x="1062" y="104.5" width="16" height="1.1" fill="#888"/><rect x="1062" y="117.8" width="16" height="1.1" fill="#666"/>
<rect x="1070" y="107.3" width="8" height="1.1" fill="#888"/>
<rect x="1070" y="110" width="8" height="1.1" fill="#888"/>
<rect x="1070" y="112.6" width="8" height="1.1" fill="#888"/>
<rect x="1070" y="115.2" width="8" height="1.1" fill="#888"/>
<path d="M1062,111.5 H1068 M1065,108.5 L1068,111.5 L1065,114.5" fill="none" stroke="#3c7fc4" stroke-width="1.8"/>
<g fill="#fff" stroke="#666" stroke-width="1"><rect x="1093.5" y="71.5" width="9.5" height="4.5"/><rect x="1093.5" y="78.5" width="9.5" height="8"/></g><path d="M1095,73 H1107 M1095,81 H1101 M1095,84 H1101" stroke="#3c7fc4" stroke-width="1"/><path d="M1107,73 C1110,74 1110,79 1105,80 M1106.5,78 L1104.5,80 L1106.5,82" fill="none" stroke="#3c7fc4" stroke-width="1.5"/>
<g fill="none" stroke="#666" stroke-width="1"><rect x="1092.5" y="103.5" width="16" height="16"/><path d="M1092.5,107.5 H1108.5 M1092.5,115.5 H1108.5 M1100.5,103.5 V107.5 M1100.5,115.5 V119.5"/></g><path d="M1095,111.5 H1106 M1097,109.5 L1095,111.5 L1097,113.5 M1104,109.5 L1106,111.5 L1104,113.5" fill="none" stroke="#3c7fc4" stroke-width="1.1"/>
<path d="M1114.0,109.75 L1120.0,109.75 L1117,113.25 Z" fill="#777"/>
<text x="1010.7" y="147.8" font-size="12" fill="#555" textLength="50" lengthAdjust="spacingAndGlyphs" >Alignment</text>
<path d="M1116.5,149 V143.5 H1122" fill="none" stroke="#999" stroke-width="1"/><path d="M1119,146 L1123.5,150.5 M1123.5,147 V150.5 H1120" fill="none" stroke="#777" stroke-width="1.1"/>
<rect x="1132.5" y="59.5" width="79" height="23" fill="#ffffff" stroke="#c6c6c6" stroke-width="1" />
<text x="1135" y="76" font-size="13.5" fill="#333" textLength="40" lengthAdjust="spacingAndGlyphs" >General</text>
<path d="M1201.0,67.5 L1208.0,67.5 L1204.5,71.5 Z" fill="#555"/>
<text x="1139" y="98" font-size="15" fill="#555" textLength="9.5" lengthAdjust="spacingAndGlyphs" >$</text>
<path d="M1157.0,92.75 L1163.0,92.75 L1160,96.25 Z" fill="#777"/>
<text x="1170.5" y="97" font-size="14" fill="#555" textLength="13.5" lengthAdjust="spacingAndGlyphs" >%</text>
<text x="1197.5" y="96" font-size="16" fill="#555" font-weight="bold" >,</text>
<path d="M1138,117 H1144 M1140.5,114.5 L1138,117 L1140.5,119.5" fill="none" stroke="#3c7fc4" stroke-width="1.6"/>
<text x="1144" y="120" font-size="9.5" fill="#555" >.0</text>
<text x="1137.5" y="128.5" font-size="9.5" fill="#555" >.00</text>
<text x="1160" y="120" font-size="9.5" fill="#555" >.00</text>
<path d="M1160,125 H1166 M1163.5,122.5 L1166,125 L1163.5,127.5" fill="none" stroke="#3c7fc4" stroke-width="1.6"/>
<text x="1166" y="128.5" font-size="9.5" fill="#555" >.0</text>
<text x="1142.8" y="147.8" font-size="12" fill="#555" textLength="41.2" lengthAdjust="spacingAndGlyphs" >Number</text>
<path d="M1204.5,149 V143.5 H1210" fill="none" stroke="#999" stroke-width="1"/><path d="M1207,146 L1211.5,150.5 M1211.5,147 V150.5 H1208" fill="none" stroke="#777" stroke-width="1.1"/>
<g fill="none" stroke="#777" stroke-width="1"><rect x="1223.5" y="61.5" width="14" height="16"/><path d="M1223.5,65.5 H1237.5 M1223.5,69.5 H1237.5 M1223.5,73.5 H1237.5 M1228,61.5 V77.5 M1233,61.5 V77.5"/></g><rect x="1225" y="62" width="3" height="3" fill="#e0522c"/><rect x="1228" y="66" width="5" height="3" fill="#3c7fc4"/><rect x="1225" y="70" width="3" height="3" fill="#e0522c"/><rect x="1230.5" y="71.5" width="10" height="8" fill="#fff" stroke="#777"/>
<text x="1242" y="75" font-size="13.5" fill="#444" textLength="66" lengthAdjust="spacingAndGlyphs" >Conditional</text>
<g fill="none" stroke="#777" stroke-width="1"><rect x="1223.5" y="87.5" width="14" height="12"/><path d="M1223.5,91.5 H1237.5 M1223.5,95.5 H1237.5 M1228,87.5 V99.5 M1233,87.5 V99.5"/></g><rect x="1228.5" y="92" width="4.5" height="3.5" fill="#bcd3ea"/><path d="M1229,103 L1240,91" stroke="#555" stroke-width="2"/><path d="M1226,103 C1227,99 1229,98 1231,100 Z" fill="#3c7fc4"/>
<text x="1242" y="98" font-size="13.5" fill="#444" >Format as Table</text>
<g fill="none" stroke="#777" stroke-width="1"><rect x="1223.5" y="110.5" width="14" height="12"/><path d="M1223.5,114.5 H1237.5"/></g><rect x="1225" y="115" width="11" height="6" fill="#bcd3ea"/><path d="M1229,126 L1240,114" stroke="#555" stroke-width="2"/><path d="M1226,126 C1227,122 1229,121 1231,123 Z" fill="#3c7fc4"/>
<text x="1242" y="121.5" font-size="13.5" fill="#444" textLength="59" lengthAdjust="spacingAndGlyphs" >Cell Styles</text>
<path d="M1301.0,115.75 L1307.0,115.75 L1304,119.25 Z" fill="#777"/>
<text x="1292" y="147.5" font-size="12" fill="#555" textLength="31" lengthAdjust="spacingAndGlyphs" >Styles</text>
<g transform="translate(16,70)"><rect x="0.5" y="0.5" width="13" height="13" fill="#fff" stroke="#777"/><rect x="4" y="2" width="8" height="2" fill="#999"/><rect x="1.5" y="5" width="2" height="7" fill="#aaa"/></g>
<rect x="24.5" y="77.5" width="10" height="9" fill="#fff" stroke="#777"/><rect x="25" y="78" width="9" height="2" fill="#3c7fc4"/><path d="M26.5,82 H33 M26.5,84.5 H33" stroke="#777"/>
<g transform="translate(73,70)"><rect x="0.5" y="0.5" width="13" height="13" fill="#fff" stroke="#777"/><rect x="4" y="2" width="8" height="2" fill="#999"/><rect x="1.5" y="5" width="2" height="7" fill="#aaa"/></g>
<circle cx="85.5" cy="84" r="4.8" fill="#3c7fc4"/><rect x="85" y="83" width="1.2" height="3.5" fill="#fff"/><rect x="85" y="80.8" width="1.2" height="1.2" fill="#fff"/>
<path d="M121,78.5 H130 M127,75 L130.5,78.5 L127,82" fill="none" stroke="#3c7fc4" stroke-width="2.2"/>
<rect x="164.5" y="70.5" width="14" height="13" fill="#fff" stroke="#666"/><rect x="164.5" y="70.5" width="14" height="2" fill="#666"/><rect x="166" y="74" width="5" height="1.5" fill="#3c7fc4"/><rect x="166" y="77" width="4" height="1.5" fill="#3c7fc4"/><rect x="166" y="80" width="6" height="1.5" fill="#9bbfe4"/><path d="M170.5,74 H178 L175,77.5 V82 L173.5,81 V77.5 Z" fill="#555"/>
<path d="M210.5,66.5 H226 L232.5,73 V96 H210.5 Z" fill="#fff" stroke="#888"/><path d="M226,66.5 V73 H232.5" fill="none" stroke="#888"/>
<g fill="none" stroke="#5aa88a" stroke-width="2.6"><path d="M225.5,90 A6.5,6.5 0 0 1 237.5,87"/><path d="M238,92 A6.5,6.5 0 0 1 226,95"/></g><path d="M234.5,84 L240,84 L239,89.5 Z" fill="#5aa88a"/><path d="M229,98 L223.5,98 L224.5,92.5 Z" fill="#5aa88a"/>
<path d="M273.5,66.5 H287 L293,72.5 V96 H273.5 Z" fill="#fff" stroke="#888"/><path d="M276,75 H290 M276,80 H290 M276,85 H290 M276,90 H290 M280,70 V94 M285,70 V94" stroke="#bbb"/><rect x="285.5" y="81.5" width="17" height="17" fill="#fff" stroke="#777"/><rect x="288" y="84" width="12" height="2.5" fill="#999"/><rect x="288" y="87.5" width="2" height="9" fill="#bbb"/><path d="M293,95 C296,95 299,92 299,88 M297,89 L299,87.5 L300.5,89.5 M292,93.5 L293,95 L291.5,96.5" fill="none" stroke="#3c7fc4" stroke-width="1.2"/>
<g transform="translate(346,71)"><rect x="0.5" y="0.5" width="13" height="13" fill="#fff" stroke="#777"/><rect x="4" y="2" width="8" height="2" fill="#999"/><rect x="1.5" y="5" width="2" height="7" fill="#aaa"/></g>
<path d="M350,82 L356,76" stroke="#3c7fc4" stroke-width="1.2"/><path d="M353,85 L360,78 L363,81 L356,88 Z" fill="#e6728a"/>
<g transform="translate(408,71)"><rect x="0.5" y="0.5" width="13" height="13" fill="#fff" stroke="#777"/><rect x="4" y="2" width="8" height="2" fill="#999"/><rect x="1.5" y="5" width="2" height="7" fill="#aaa"/></g>
<text x="414.5" y="88" font-size="11" fill="#555" font-style="italic" font-family="Liberation Serif">fx</text>
<rect x="469.5" y="71.5" width="10" height="10" fill="#fff" stroke="#777"/><rect x="474" y="74" width="2" height="2" fill="#3c7fc4"/><rect x="474.5" y="78.5" width="10" height="10" fill="#fff" stroke="#777"/><rect x="474.5" y="78.5" width="10" height="2.5" fill="#3c7fc4"/>
<text x="478" y="89" font-size="10" fill="#555" font-style="italic" font-family="Liberation Serif">fx</text>
<rect x="517.5" y="71.5" width="10" height="15" fill="#fff" stroke="#777"/><rect x="517.5" y="71.5" width="10" height="2.5" fill="#3c7fc4"/><path d="M519,77 H526 M519,80 H526 M519,83 H526 M522.5,80 V86" stroke="#888"/>
<rect x="92.5" y="516.5" width="698" height="64" fill="#ffffff" stroke="#00b050" stroke-width="1.1" />
<text x="101" y="541.7" font-size="20.5" fill="#111" textLength="645" lengthAdjust="spacingAndGlyphs" >Timeline has been created in output Excel file using Aspose.Cells API</text>
<path d="M395.5,643.5 H731.5 V605.5 L806,681 L731.5,756 V718.5 H395.5 Z" fill="none" stroke="#f23b3b" stroke-width="1.3"/>
<rect x="822.5" y="541.5" width="394" height="162" fill="#ffffff" stroke="#5b9bd5" stroke-width="1.2" />
<text x="831" y="561" font-size="13.5" fill="#111" font-weight="bold" textLength="62.4" lengthAdjust="spacingAndGlyphs" >Ship Date</text>
<line x1="830" y1="571.5" x2="1208" y2="571.5" stroke="#5b9bd5" stroke-width="1" />
<text x="831" y="590" font-size="13.5" fill="#3c7fc4" textLength="63" lengthAdjust="spacingAndGlyphs" >All Periods</text>
<text x="1155" y="590.2" font-size="11" fill="#888" textLength="32.7" lengthAdjust="spacingAndGlyphs" >YEARS</text>
<path d="M1195.0,584.75 L1203.0,584.75 L1199,589.25 Z" fill="#999"/>
<g fill="none" stroke="#aaa" stroke-width="1.1"><path d="M1191,549 H1202 L1197.5,554 V560 L1195.5,558 V554 Z" fill="#ccc"/><path d="M1198.5,558 L1206,565 M1206,558 L1198.5,565" stroke-width="1.5"/></g>
<text x="830.5" y="640" font-size="11.5" fill="#666" >0</text>
<text x="870.7" y="640" font-size="11.5" fill="#666" textLength="24.5" lengthAdjust="spacingAndGlyphs" >2011</text>
<text x="929" y="640" font-size="11.5" fill="#666" textLength="24.5" lengthAdjust="spacingAndGlyphs" >2012</text>
<text x="988.9" y="640" font-size="11.5" fill="#666" textLength="24.5" lengthAdjust="spacingAndGlyphs" >2013</text>
<text x="1048" y="640" font-size="11.5" fill="#666" textLength="24.5" lengthAdjust="spacingAndGlyphs" >2014</text>
<text x="1107" y="640" font-size="11.5" fill="#666" textLength="24.5" lengthAdjust="spacingAndGlyphs" >2015</text>
<text x="1166.4" y="640" font-size="11.5" fill="#666" textLength="24.5" lengthAdjust="spacingAndGlyphs" >2016</text>
<defs><linearGradient id="tg" x1="0" y1="0" x2="0" y2="1"><stop offset="0" stop-color="#c5dcf2"/><stop offset="0.6" stop-color="#a4c6ea"/><stop offset="1" stop-color="#5b9bd5"/></linearGradient></defs>
<rect x="831" y="648" width="377" height="18.4" fill="url(#tg)" />
<line x1="869" y1="648" x2="869" y2="666.4" stroke="#d6e6f6" stroke-width="1" />
<line x1="927.5" y1="648" x2="927.5" y2="666.4" stroke="#d6e6f6" stroke-width="1" />
<line x1="987.3" y1="648" x2="987.3" y2="666.4" stroke="#d6e6f6" stroke-width="1" />
<line x1="1046.4" y1="648" x2="1046.4" y2="666.4" stroke="#d6e6f6" stroke-width="1" />
<line x1="1105.5" y1="648" x2="1105.5" y2="666.4" stroke="#d6e6f6" stroke-width="1" />
<line x1="1164.5" y1="648" x2="1164.5" y2="666.4" stroke="#d6e6f6" stroke-width="1" />
<rect x="831.5" y="675.5" width="16.5" height="16.3" fill="#ffffff" stroke="#c6c6c6" stroke-width="1" />
<path d="M842,679.5 L837,683.5 L842,687.5 Z" fill="#666"/>
<rect x="848" y="679" width="17" height="8.5" fill="#d6e5f4" />
<rect x="865.5" y="675.5" width="312" height="16.3" fill="#ffffff" stroke="#c6c6c6" stroke-width="1" />
<rect x="1177.5" y="679" width="14.5" height="8.5" fill="#d6e5f4" />
<rect x="1192" y="675.5" width="15.7" height="16.3" fill="#ffffff" stroke="#c6c6c6" stroke-width="1" />
<path d="M1197.5,679.5 L1202.5,683.5 L1197.5,687.5 Z" fill="#666"/>
</svg>
</body></html>
